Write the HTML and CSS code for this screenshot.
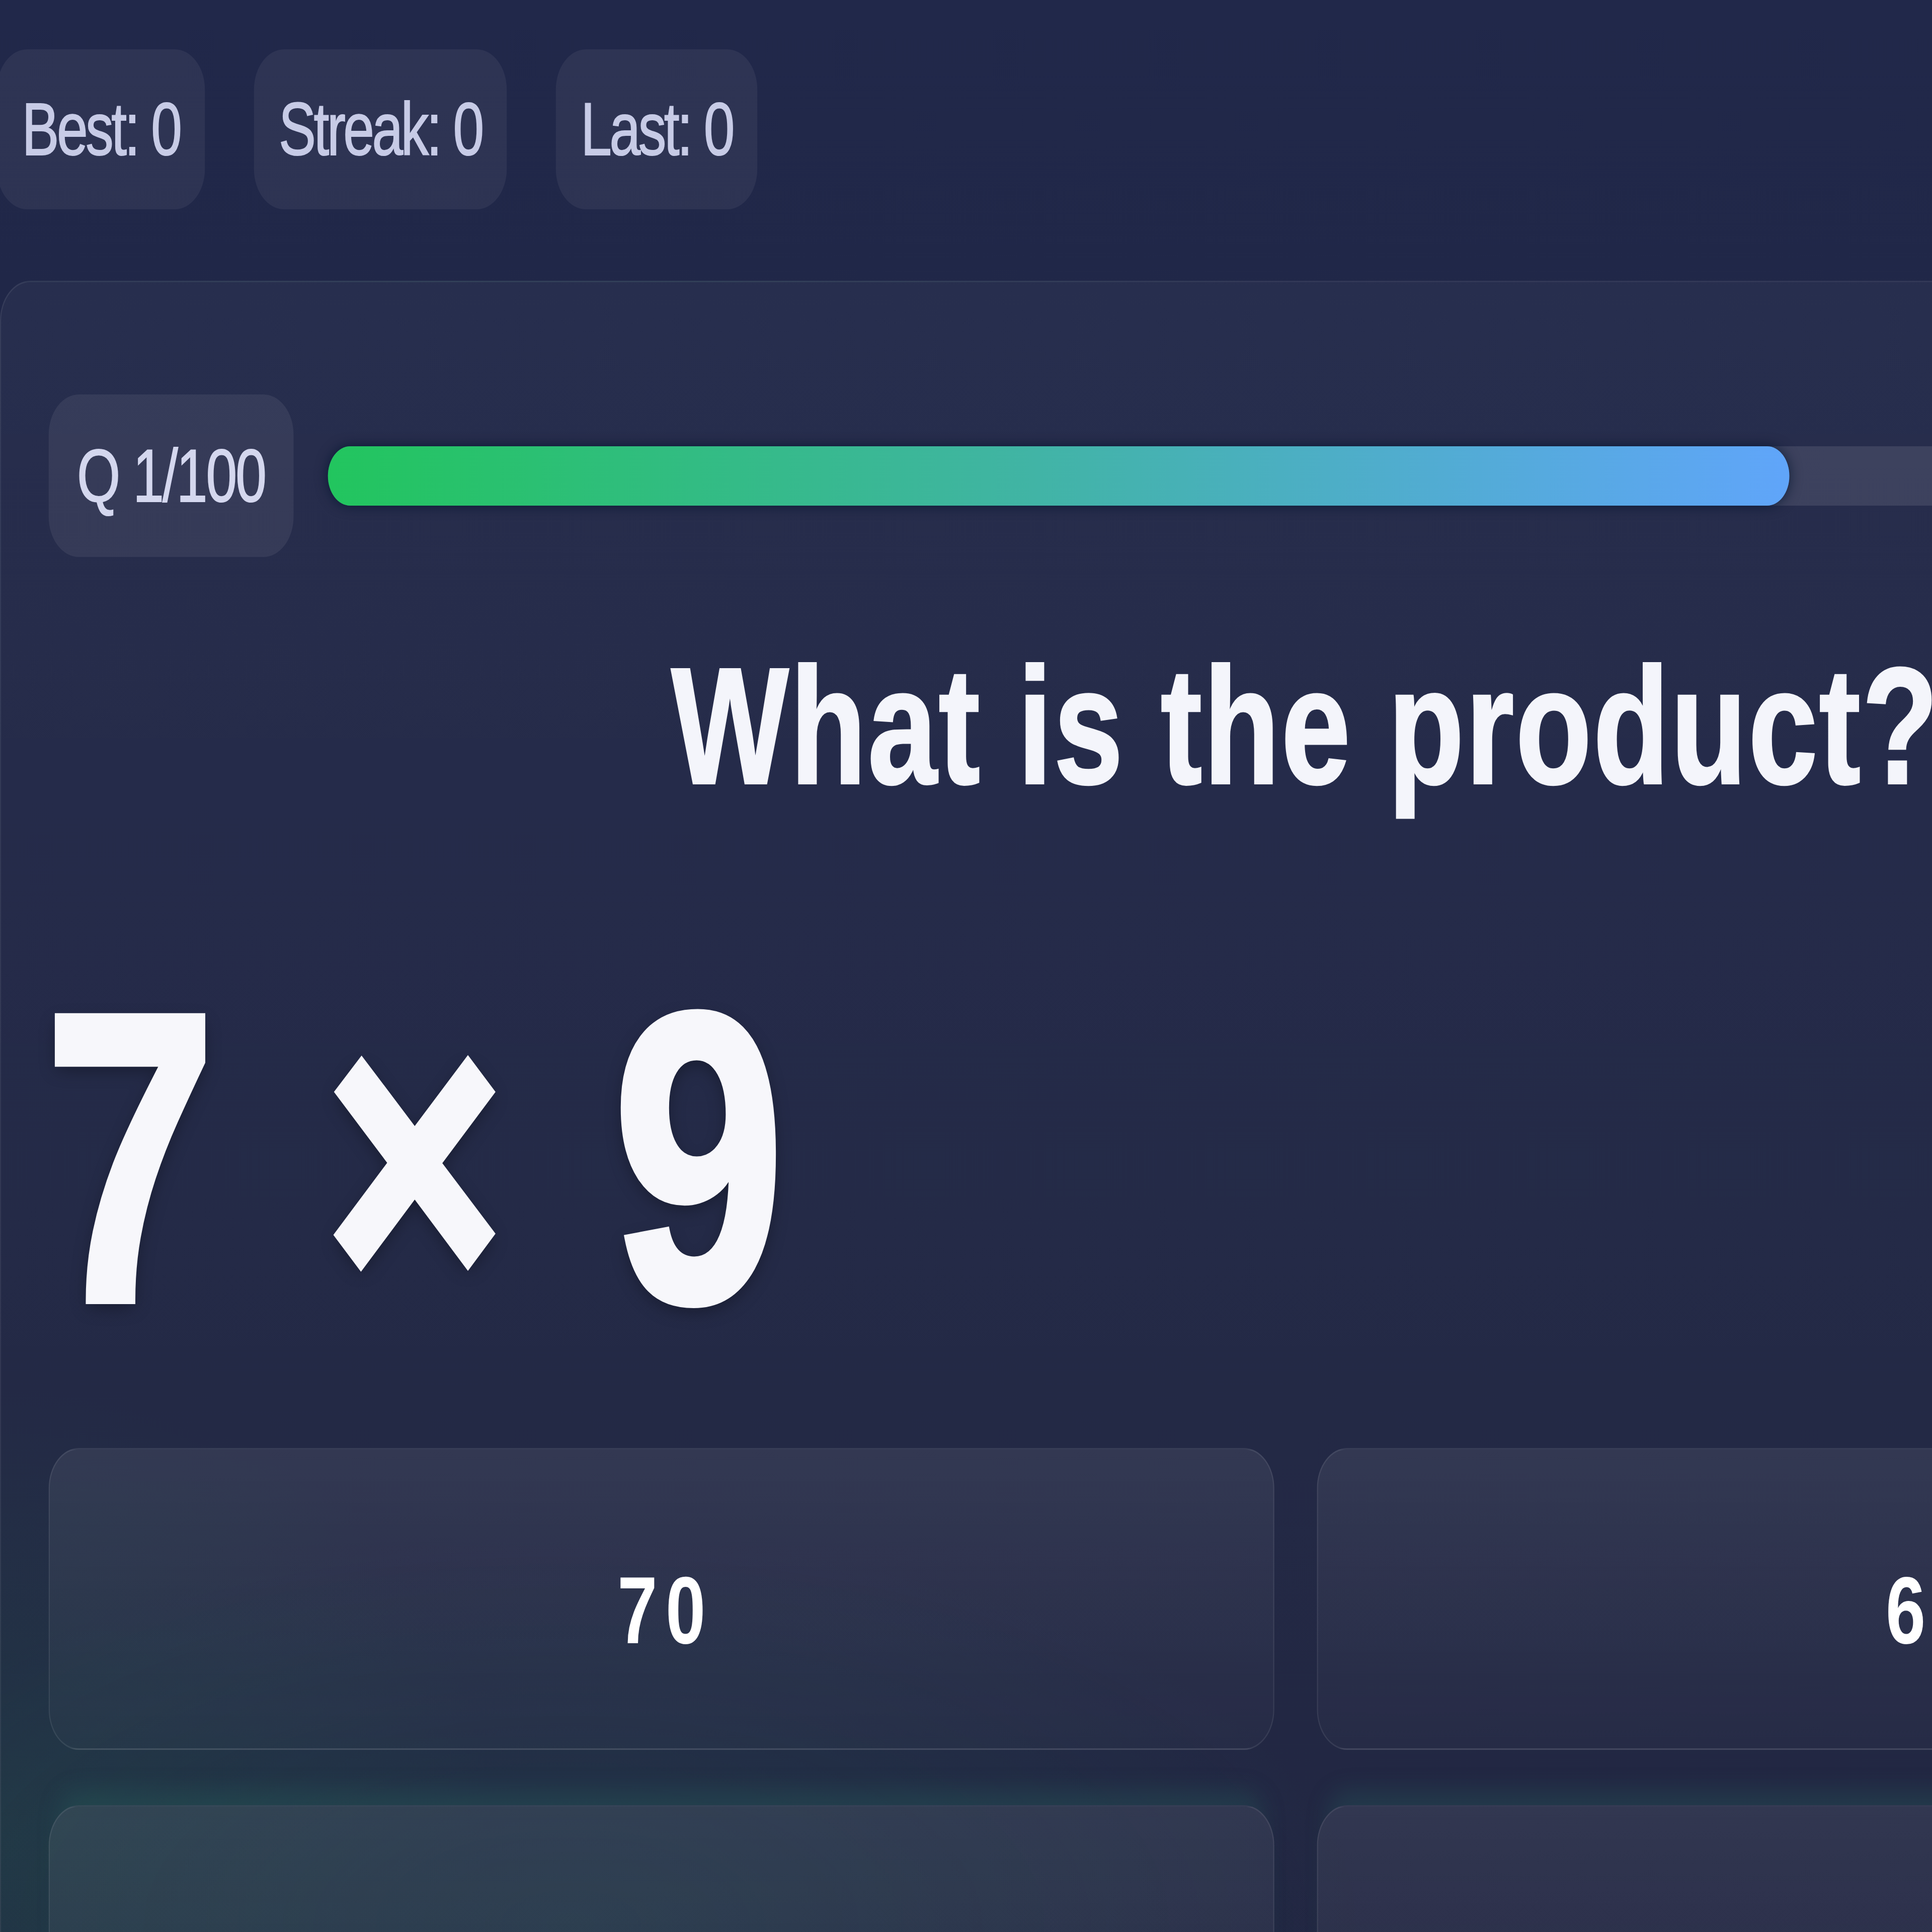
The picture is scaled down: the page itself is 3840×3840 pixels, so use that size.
FILE: index.html
```html
<!DOCTYPE html>
<html lang="en">
<head>
<meta charset="utf-8">
<title>Multiplication Quiz</title>
<link rel="stylesheet" href="styles.css">
</head>
<body>
<div class="page">
  <div class="stats">
    <div class="stat">Best: 0</div>
    <div class="stat">Streak: 0</div>
    <div class="stat">Last: 0</div>
  </div>
  <section class="card">
    <div class="progress-row">
      <div class="qpill">Q 1/100</div>
      <div class="track"><div class="fill" style="width:66%"></div></div>
    </div>
    <h1 class="question">What is the product?</h1>
    <div class="equation">7 × 9</div>
    <div class="answers">
      <button class="answer">70</button>
      <button class="answer">63</button>
      <button class="answer alt">56</button>
      <button class="answer alt">72</button>
    </div>
  </section>
</div>
</body>
</html>
```
FILE: styles.css
```css
html, body {
  margin: 0;
  padding: 0;
  width: 3840px;
  height: 3840px;
  overflow: hidden;
}
body {
  background:
    radial-gradient(ellipse 1400px 1300px at 0% 95%, rgba(30, 70, 70, 0.45), rgba(30, 70, 70, 0) 70%),
    linear-gradient(180deg, #21284a 0%, #1f2645 40%, #1f2440 100%);
  font-family: "Liberation Sans", Arial, sans-serif;
}
.page {
  width: 5200px;
  padding-top: 98px;
  transform: scaleX(0.75);
  transform-origin: 0 0;
}
.stats {
  display: flex;
  gap: 130px;
  margin-left: -8px;
}
.stat {
  height: 318px;
  padding: 0 66px;
  display: flex;
  align-items: center;
  border-radius: 80px;
  background: rgba(255, 255, 255, 0.06);
  color: #c7cbe6;
  font-size: 148px;
  letter-spacing: -6px;
  -webkit-text-stroke: 2px #c7cbe6;
}
.card {
  margin-top: 142px;
  width: 6867px;
  min-height: 3600px;
  box-sizing: border-box;
  padding: 223px 126px 0;
  border: 3px solid rgba(255, 255, 255, 0.07);
  border-radius: 80px;
  background:
    radial-gradient(ellipse 3000px 1100px at 22% 90%, rgba(34, 110, 90, 0.2), rgba(34, 110, 90, 0) 70%),
    linear-gradient(180deg, rgba(255, 255, 255, 0.035), rgba(255, 255, 255, 0.01));
}
.progress-row {
  display: flex;
  align-items: center;
  gap: 91px;
}
.qpill {
  height: 323px;
  padding: 0 75px;
  display: flex;
  align-items: center;
  border-radius: 80px;
  background: rgba(255, 255, 255, 0.07);
  color: #d4d7ee;
  font-size: 148px;
  letter-spacing: -4px;
  -webkit-text-stroke: 2px #d4d7ee;
  white-space: nowrap;
}
.track {
  flex: 1;
  height: 118px;
  border-radius: 59px;
  background: rgba(255, 255, 255, 0.1);
}
.fill {
  height: 100%;
  border-radius: 59px;
  background: linear-gradient(90deg, #22c55e 0%, #3fb5a0 45%, #60a5fa 100%);
  box-shadow: 0 0 28px rgba(0, 20, 45, 0.75);
}
.question {
  margin: 138px 0 0;
  padding-left: 52px;
  text-align: center;
  font-size: 330px;
  line-height: 1.2;
  font-weight: 700;
  letter-spacing: 4px;
  color: #f4f5fb;
  -webkit-text-stroke: 4px #f4f5fb;
}
.equation {
  margin-top: 250px;
  margin-left: -12px;
  font-size: 820px;
  line-height: 1;
  font-weight: 700;
  color: #f7f7fb;
  letter-spacing: 18px;
  word-spacing: 22px;
  -webkit-text-stroke: 14px #f7f7fb;
  text-shadow: 0 12px 40px rgba(0, 0, 0, 0.35);
}
.answers {
  margin-top: 167px;
  display: grid;
  grid-template-columns: 1fr 1fr;
  gap: 110px 113px;
}
.answer {
  height: 600px;
  border-radius: 80px;
  border: 3px solid rgba(255, 255, 255, 0.08);
  background: linear-gradient(180deg, rgba(255, 255, 255, 0.075), rgba(255, 255, 255, 0.02));
  display: flex;
  align-items: center;
  justify-content: center;
  font-family: "Liberation Sans", Arial, sans-serif;
  font-size: 190px;
  font-weight: 700;
  letter-spacing: 22px;
  color: #ffffff;
  padding: 44px 0 0 22px;
}
.answer.alt {
  box-shadow: 0 -60px 50px -30px rgba(40, 110, 100, 0.25);
}
```
